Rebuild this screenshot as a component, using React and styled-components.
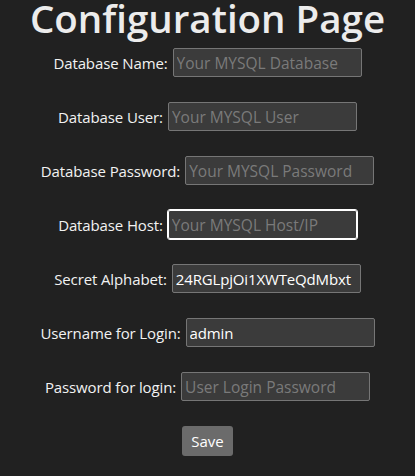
import React from "react";
import styled, { createGlobalStyle } from "styled-components";

const Global = createGlobalStyle`
  html, body { margin: 0; padding: 0; background: #212121; }
  body { font-family: "Open Sans", "Noto Sans", sans-serif; color: #f0f0f0; }
`;

const Page = styled.main`
  display: flex;
  flex-direction: column;
  align-items: center;
`;

const Title = styled.h1`
  margin: 0 0 12px;
  font-size: 38.5px;
  line-height: 36px;
  font-weight: 600;
  color: #ececec;
`;

const Form = styled.form`
  display: flex;
  flex-direction: column;
  align-items: center;
  gap: 25px;
`;

const Row = styled.div`
  display: flex;
  align-items: center;
  justify-content: center;
  gap: 5px;
`;

const Label = styled.label`
  font-size: 15px;
  letter-spacing: -0.12px;
  color: #f2f2f2;
`;

const Input = styled.input`
  box-sizing: border-box;
  width: 189px;
  height: 29px;
  padding: 0 3px;
  background: #3b3b3b;
  border: 1px solid ${(p) => (p.$focused ? "#ffffff" : "#767676")};
  outline: ${(p) => (p.$focused ? "1px solid #ffffff" : "none")};
  border-radius: 2px;
  color: #ffffff;
  font-family: "Open Sans", "Noto Sans", sans-serif;
  font-size: ${(p) => (p.$strong ? "15px" : "15.5px")};
  font-weight: ${(p) => (p.$strong ? 500 : 400)};
  letter-spacing: ${(p) => (p.$strong ? "-0.15px" : "0")};
  &::placeholder { color: #7a7a7a; }
`;

const Button = styled.button`
  height: 30px;
  padding: 0 9px;
  background: #6b6b6b;
  border: none;
  border-radius: 3px;
  color: #ffffff;
  font-family: "Open Sans", "Noto Sans", sans-serif;
  font-size: 15px;
`;

const fields = [
  { label: "Database Name:", ph: "Your MYSQL Database" },
  { label: "Database User:", ph: "Your MYSQL User" },
  { label: "Database Password:", ph: "Your MYSQL Password" },
  { label: "Database Host:", ph: "Your MYSQL Host/IP", focused: true },
  { label: "Secret Alphabet:", value: "24RGLpjOi1XWTeQdMbxt", strong: true },
  { label: "Username for Login:", value: "admin", strong: true },
  { label: "Password for login:", ph: "User Login Password" },
];

export default function App() {
  return (
    <>
      <Global />
      <Page>
        <Title>Configuration Page</Title>
        <Form onSubmit={(e) => e.preventDefault()}>
          {fields.map((f) => (
            <Row key={f.label}>
              <Label>{f.label}</Label>
              <Input
                placeholder={f.ph}
                defaultValue={f.value}
                $focused={f.focused}
                $strong={f.strong}
              />
            </Row>
          ))}
          <Button type="submit">Save</Button>
        </Form>
      </Page>
    </>
  );
}
